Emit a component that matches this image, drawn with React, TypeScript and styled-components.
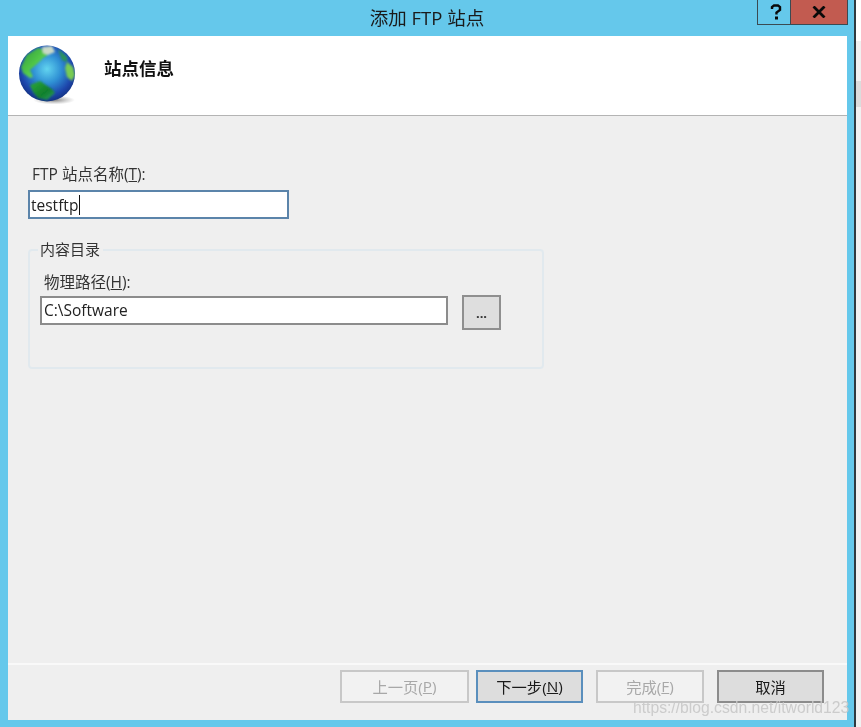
import styled, { createGlobalStyle } from "styled-components";

const Global = createGlobalStyle`
  html, body {
    margin: 0;
    padding: 0;
    background: #f0f0f0;
  }
  body {
    font-family: "Open Sans", "Noto Sans CJK SC", sans-serif;
  }
`;

const Screen = styled.div`
  position: relative;
  width: 861px;
  height: 727px;
  overflow: hidden;
  display: flex;
  background: #f1f1f1;
  filter: blur(0.3px);
`;

const Window = styled.div`
  width: 854px;
  height: 727px;
  background: #65c8eb;
  border-right: 2px solid #2f3a40;
  display: flex;
  flex-direction: column;
  flex-shrink: 0;
`;

const TitleBar = styled.div`
  height: 36px;
  display: grid;
  grid-template-columns: 1fr auto 1fr;
  align-items: start;
  flex-shrink: 0;
`;

const Title = styled.div`
  grid-column: 2;
  font-size: 18.5px;
  line-height: 36px;
  color: #1a1a1a;
`;

const Controls = styled.div`
  grid-column: 3;
  justify-self: end;
  display: flex;
  margin-right: 6px;
`;

const ControlButton = styled.div<{ $close?: boolean }>`
  width: ${(p) => (p.$close ? "57px" : "34px")};
  height: 25px;
  box-sizing: border-box;
  border: 1px solid #3a4a52;
  border-top: none;
  border-left-width: ${(p) => (p.$close ? "0" : "1px")};
  background: ${(p) => (p.$close ? "#c25b50" : "transparent")};
  padding-left: ${(p) => (p.$close ? "0" : "3px")};
  display: flex;
  align-items: center;
  justify-content: center;
`;

const Body = styled.div`
  flex: 1;
  margin: 0 7px 7px 8px;
  display: flex;
  flex-direction: column;
  background: #efefef;
  min-height: 0;
`;

const Header = styled.div`
  height: 80px;
  flex-shrink: 0;
  box-sizing: border-box;
  background: #fff;
  border-bottom: 1px solid #b4b4b4;
  display: flex;
  align-items: flex-start;
  padding: 8px 0 0 10px;
`;

const HeaderTitle = styled.div`
  margin: 13px 0 0 28px;
  font-size: 17.5px;
  font-weight: 700;
  line-height: 22px;
  color: #111;
`;

const Content = styled.div`
  flex: 1;
  padding: 48px 0 0 20px;
  min-height: 0;
`;

const FieldLabel = styled.div`
  font-size: 15.5px;
  line-height: 20px;
  color: #333;
  margin-left: 4px;
`;

const Key = styled.span`
  text-decoration: underline;
`;

const NameInput = styled.div`
  box-sizing: border-box;
  width: 261px;
  height: 29px;
  margin-top: 6px;
  padding-left: 1px;
  background: #fff;
  border: 2px solid #5b84aa;
  font-size: 15.5px;
  line-height: 24px;
  color: #222;
  display: flex;
  align-items: center;
`;

const Caret = styled.span`
  width: 1px;
  height: 20px;
  margin-left: 1px;
  background: #111;
`;

const Group = styled.div`
  position: relative;
  box-sizing: border-box;
  width: 516px;
  height: 120px;
  margin-top: 30px;
  border: 2px solid #e1e9ee;
  border-radius: 4px;
  padding: 21px 0 0 10px;
`;

const GroupLegend = styled.div`
  position: absolute;
  top: -12px;
  left: 8px;
  padding: 0 3px 0 2px;
  background: #efefef;
  font-size: 15px;
  line-height: 20px;
  color: #333;
`;

const PathLabel = styled(FieldLabel)`
  margin-left: 4px;
`;

const PathRow = styled.div`
  display: flex;
  align-items: flex-start;
  margin-top: 4px;
`;

const PathInput = styled.div`
  box-sizing: border-box;
  width: 408px;
  height: 29px;
  padding-left: 2px;
  background: #fff;
  border: 2px solid #8c8c8c;
  font-size: 15.5px;
  line-height: 25px;
  color: #222;
`;

const BrowseButton = styled.div`
  box-sizing: border-box;
  width: 39px;
  height: 35px;
  margin: -1px 0 0 14px;
  background: #dedede;
  border: 2px solid #8f8f8f;
  display: flex;
  align-items: center;
  justify-content: center;
  padding-top: 1px;
  font-size: 13px;
  font-weight: 700;
  color: #333;
`;

const Footer = styled.div`
  height: 57px;
  flex-shrink: 0;
  box-sizing: border-box;
  border-top: 2px solid #f9f9f9;
  display: flex;
  align-items: flex-start;
  padding: 5px 0 0 332px;
`;

const WizardButton = styled.div<{ $width: number; $gap?: number; $tone?: "off" | "focus" | "plain" }>`
  box-sizing: border-box;
  width: ${(p) => p.$width}px;
  height: 33px;
  margin-left: ${(p) => p.$gap ?? 0}px;
  padding-bottom: 1px;
  display: flex;
  align-items: center;
  justify-content: center;
  font-size: 15.3px;
  background: ${(p) => (p.$tone === "off" ? "#f2f2f2" : "#dddddd")};
  color: ${(p) => (p.$tone === "off" ? "#a8a8a8" : "#1a1a1a")};
  border: 2px solid
    ${(p) =>
      p.$tone === "off" ? "#c8c8c8" : p.$tone === "focus" ? "#5a8fbd" : "#8c8c8c"};
`;

const Watermark = styled.div`
  position: absolute;
  left: 633px;
  top: 698px;
  font-family: "Liberation Sans", sans-serif;
  font-size: 15.7px;
  line-height: 20px;
  white-space: nowrap;
  color: rgba(200, 200, 200, 0.9);
`;

const StripRow = styled.div<{ $height: number; $tone: string }>`
  height: ${(p) => p.$height}px;
  background: ${(p) => p.$tone};
`;

const Strip = styled.div`
  flex: 1;
  display: flex;
  flex-direction: column;
`;

const Globe = () => (
  <svg width="58" height="62" viewBox="0 0 58 62">
    <defs>
      <radialGradient id="sea" cx="0.5" cy="0.42" r="0.6">
        <stop offset="0" stopColor="#62d4ef" />
        <stop offset="0.42" stopColor="#2f90d4" />
        <stop offset="0.78" stopColor="#1d45ab" />
        <stop offset="1" stopColor="#122f7a" />
      </radialGradient>
      <radialGradient id="shade" cx="0.5" cy="0.5" r="0.5">
        <stop offset="0" stopColor="#555" stopOpacity="0.75" />
        <stop offset="1" stopColor="#888" stopOpacity="0" />
      </radialGradient>
      <linearGradient id="north" x1="0" y1="0" x2="1" y2="1">
        <stop offset="0" stopColor="#2d9a3c" />
        <stop offset="0.6" stopColor="#58cf4a" />
        <stop offset="1" stopColor="#8ade80" />
      </linearGradient>
      <linearGradient id="south" x1="0" y1="0" x2="1" y2="1">
        <stop offset="0" stopColor="#2faa3a" />
        <stop offset="0.6" stopColor="#107f2c" />
        <stop offset="1" stopColor="#2f9f66" />
      </linearGradient>
      <clipPath id="ball">
        <circle cx="29" cy="29.5" r="28" />
      </clipPath>
      <filter id="soft" x="-10%" y="-10%" width="120%" height="120%">
        <feGaussianBlur stdDeviation="0.9" />
      </filter>
    </defs>
    <ellipse cx="36" cy="56" rx="21" ry="4.5" fill="url(#shade)" />
    <circle cx="29" cy="29.5" r="28" fill="url(#sea)" />
    <g clipPath="url(#ball)">
      <g filter="url(#soft)">
        <path d="M3 23 L8.7 11 L20 4 L27 6 L30 11 L25 14 L20 19 L12 26 L15 33 L12 34 L5 29 Z" fill="url(#north)" />
        <path d="M24 3 L34 2 L37 8 L30 11 L25 9 Z" fill="#c9d9c6" />
        <path d="M40 5 L49 13 L49 18 L44 16 Z" fill="#2c9556" />
        <path d="M49 18 L55 23 L57 31 L54 37 L49 33 L47 24 Z" fill="#78cc52" />
        <path d="M12 41 L22 37 L35 46 L37 49 L29 56 L20 54 L15 48 Z" fill="url(#south)" />
      </g>
    </g>
  </svg>
);

const HelpIcon = () => (
  <svg width="12" height="16" viewBox="0 0 12 16">
    <path d="M2 5 V3 L4 1.5 H8 L10 3 V6 L6.5 8.5 V10.5" fill="none" stroke="#0a0a0a" strokeWidth="2.4" />
    <rect x="5" y="12.5" width="3" height="3" fill="#0a0a0a" />
  </svg>
);

const CloseIcon = () => (
  <svg width="14" height="12" viewBox="0 0 14 12">
    <path d="M1.5 0.5 L12.5 11.5 M12.5 0.5 L1.5 11.5" stroke="#0a0a0a" strokeWidth="2.8" />
  </svg>
);

export default function App() {
  return (
    <Screen>
      <Global />
      <Window>
        <TitleBar>
          <Title>添加 FTP 站点</Title>
          <Controls>
            <ControlButton><HelpIcon /></ControlButton>
            <ControlButton $close><CloseIcon /></ControlButton>
          </Controls>
        </TitleBar>
        <Body>
          <Header>
            <Globe />
            <HeaderTitle>站点信息</HeaderTitle>
          </Header>
          <Content>
            <FieldLabel>FTP 站点名称(<Key>T</Key>):</FieldLabel>
            <NameInput>testftp<Caret /></NameInput>
            <Group>
              <GroupLegend>内容目录</GroupLegend>
              <PathLabel>物理路径(<Key>H</Key>):</PathLabel>
              <PathRow>
                <PathInput>C:\Software</PathInput>
                <BrowseButton>...</BrowseButton>
              </PathRow>
            </Group>
          </Content>
          <Footer>
            <WizardButton $width={129} $tone="off">上一页(<Key>P</Key>)</WizardButton>
            <WizardButton $width={107} $gap={7} $tone="focus">下一步(<Key>N</Key>)</WizardButton>
            <WizardButton $width={108} $gap={13} $tone="off">完成(<Key>F</Key>)</WizardButton>
            <WizardButton $width={107} $gap={13} $tone="plain">取消</WizardButton>
          </Footer>
        </Body>
      </Window>
      <Strip>
        <StripRow $height={41} $tone="#ffffff" />
        <StripRow $height={40} $tone="#f1f1f1" />
        <StripRow $height={26} $tone="#dcdcdc" />
        <StripRow $height={620} $tone="#f1f1f1" />
      </Strip>
      <Watermark>https://blog.csdn.net/itworld123</Watermark>
    </Screen>
  );
}
